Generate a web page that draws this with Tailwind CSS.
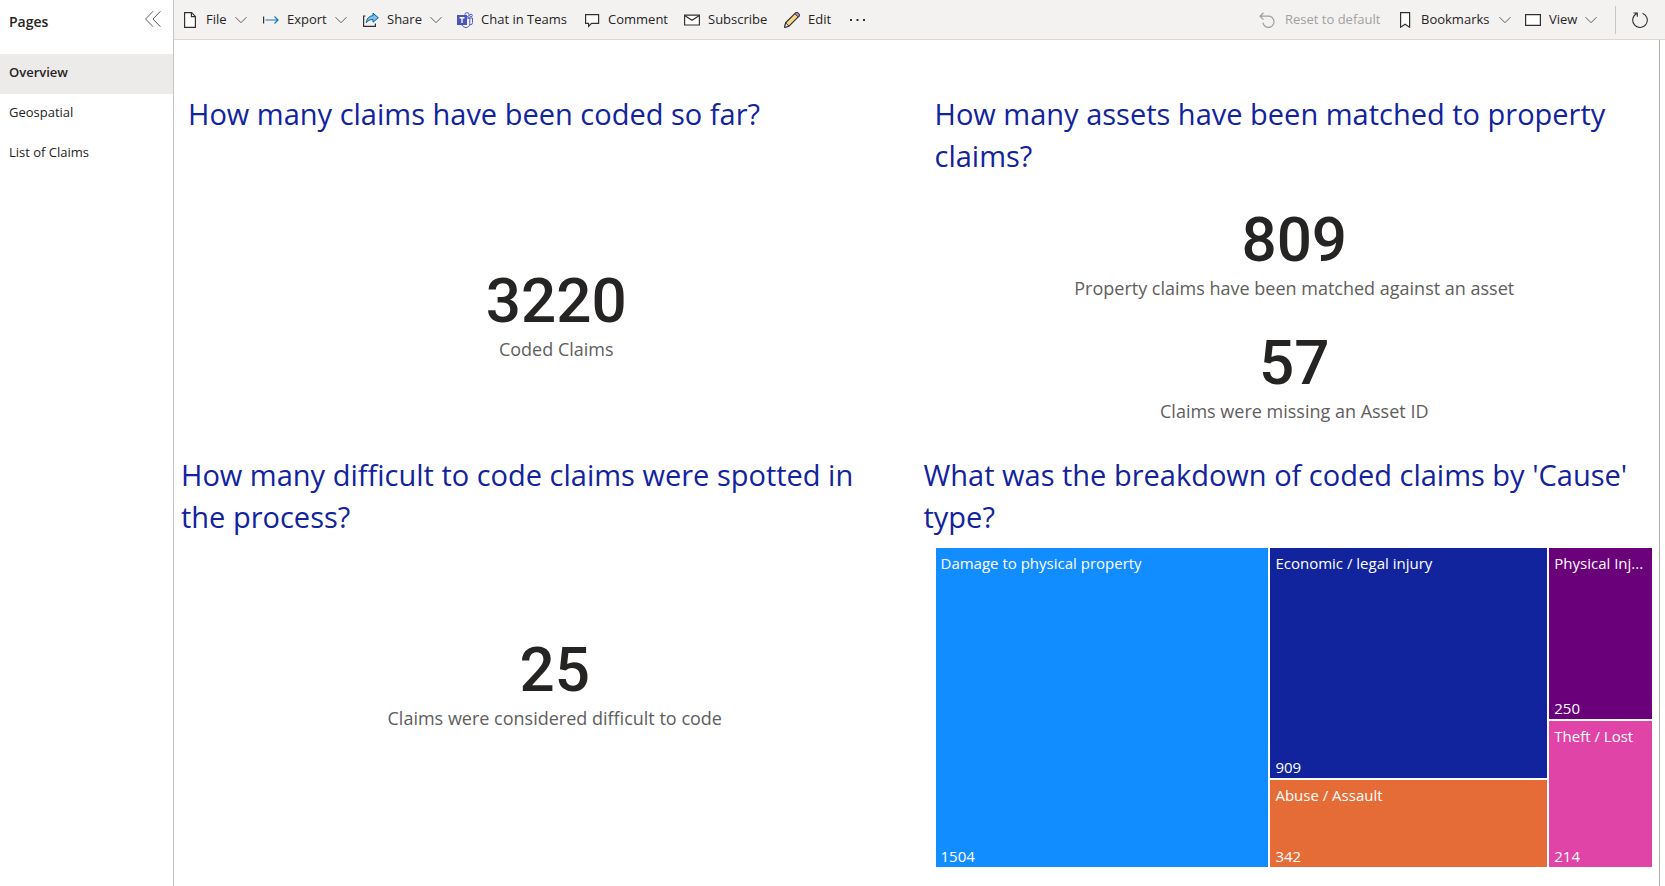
<!DOCTYPE html>
<html lang="en">
<head>
<meta charset="utf-8">
<title>Claims overview</title>
<script src="https://cdn.jsdelivr.net/npm/@tailwindcss/browser@4"></script>
</head>
<body class="flex min-h-screen bg-white font-['Open_Sans','Noto_Sans',sans-serif] text-[13px] text-[#252423]">
<svg class="hidden" aria-hidden="true">
  <symbol id="chevron" viewBox="0 0 12 12"><path d="M.5 3.2 6 8.700 11.500 3.200" fill="none" stroke="currentColor"/></symbol>
</svg>

<aside class="w-[174px] shrink-0 border-r border-[#c8c6c4]">
  <div class="flex h-[54px] items-start justify-between pt-[11px] pr-3 pl-[9px]">
    <h1 class="pt-px text-sm font-semibold">Pages</h1>
    <button type="button" aria-label="Collapse pages" class="text-[#605e5c]">
      <svg class="size-4" viewBox="0 0 16 16" fill="none" stroke="currentColor"><path d="M8 .3.600 8 8 15.700M15.400.3 8 8l7.400 7.700"/></svg>
    </button>
  </div>
  <nav class="flex flex-col">
    <a href="#overview" class="flex h-10 items-center bg-[#edebe9] px-[9px] pb-[2px] font-semibold" aria-current="page">Overview</a>
    <a href="#geospatial" class="flex h-10 items-center px-[9px] pb-[2px]">Geospatial</a>
    <a href="#claims" class="flex h-10 items-center px-[9px] pb-[2px]">List of Claims</a>
  </nav>
</aside>

<div class="flex min-w-0 grow flex-col">
  <header class="flex h-10 shrink-0 items-center justify-between border-b border-[#d9d8d6] bg-[#f3f2f1] pr-[17px] pl-2 whitespace-nowrap">
    <div class="flex items-center">
      <button type="button" class="flex w-[81px] items-center gap-2">
        <svg class="size-4" viewBox="0 0 16 16" fill="#fff" stroke="#323130" stroke-width="1.200"><path d="M2.600.600h7l3.800 3.800v11H2.600z"/><path d="M9.400.6v4h4" fill="none"/></svg>
        File
        <svg class="size-3 text-[#605e5c]"><use href="#chevron"/></svg>
      </button>
      <button type="button" class="flex w-[100px] items-center gap-2">
        <svg class="size-4" viewBox="0 0 16 16" fill="none"><path d="M.6 4.500v7" stroke="#323130" stroke-width="1.200"/><path d="M2.500 8h12.500M11.500 4.500 15 8l-3.500 3.500" stroke="#1a76b8" stroke-width="1.200"/></svg>
        Export
        <svg class="size-3 text-[#605e5c]"><use href="#chevron"/></svg>
      </button>
      <button type="button" class="flex w-[94px] items-center gap-2">
        <svg class="size-4" viewBox="0 0 16 16" fill="none"><path d="M2.500 4H.6v10.400h11.800V11.500" stroke="#323130" stroke-width="1.200"/><path d="M10 1.200 15.300 5.700 10 10.200V7.600C7 7.400 5 8.500 3.300 10.800 3.600 7 5.800 4 10 3.700z" fill="#83beec" stroke="#005b9d" stroke-linejoin="round"/></svg>
        Share
        <svg class="size-3 text-[#605e5c]"><use href="#chevron"/></svg>
      </button>
      <button type="button" class="flex w-[127px] items-center gap-2">
        <svg class="size-4" viewBox="0 0 16 16" fill="none" stroke="#5059c9"><circle cx="10" cy="2.700" r="2.100"/><circle cx="14" cy="3.500" r="1.300"/><path d="M11 6h4.500v4.500a2.300 2.300 0 0 1-2.600 2.300"/><path d="M5 13c1 1.900 2.600 2.500 4 2.500 2.300 0 3.800-1.500 3.800-3.800V6H8"/><path d="M0 3h10v10H0z" fill="#4b53bc" stroke="none"/><path d="M2.500 5.700h5M5 5.700v5.300" stroke="#fff" stroke-width="1.400"/></svg>
        Chat in Teams
      </button>
      <button type="button" class="flex w-[100px] items-center gap-2">
        <svg class="size-4" viewBox="0 0 16 16" fill="#fff" stroke="#323130" stroke-width="1.200"><path d="M1.600 2.600h13v8.800H7.500L4.600 14.300v-2.900h-3z"/></svg>
        Comment
      </button>
      <button type="button" class="flex w-[100px] items-center gap-2">
        <svg class="size-4" viewBox="0 0 16 16" fill="#fff" stroke="#323130" stroke-width="1.200"><path d="M.6 3.100h14.800v9.900H.600z"/><path d="m.6 3.500 7.400 4.700 7.400-4.700" fill="none"/></svg>
        Subscribe
      </button>
      <button type="button" class="flex w-[66px] items-center gap-2">
        <svg class="size-4" viewBox="0 0 16 16" stroke="#323130" stroke-linejoin="round"><path d="M1.600 10.800 11.600.9c1.500-1.200 4.500 1.300 3.400 3.300l-10 10-4.300 1.200z" fill="#f7d583" stroke-width="1.200"/><path d="m10.900 1.700.8-.8c1.500-1.200 4.500 1.300 3.400 3.300l-.8.8z" fill="#b590c9"/><path d="m1.600 10.800 3.400 3.400-4.300 1.200z" fill="#fff"/></svg>
        Edit
      </button>
      <button type="button" aria-label="More options">
        <svg class="size-4" viewBox="0 0 16 16" fill="#323130"><path d="M0 7h2v2H0zM6.500 7h2v2h-2zM13 7h2v2h-2z"/></svg>
      </button>
    </div>
    <div class="flex items-center">
      <button type="button" disabled class="flex w-[141px] items-center gap-[10px] text-[#a19f9d]">
        <svg class="size-4" viewBox="0 0 16 16" fill="none" stroke="currentColor" stroke-width="1.200"><path d="M4.500.8 1 4.200l3.500 3.500M1 4.200h8.500a5.600 5.600 0 1 1-5.600 6.500"/></svg>
        Reset to default
      </button>
      <button type="button" class="flex w-[125px] items-center gap-[10px]">
        <svg class="h-4 w-[11px]" viewBox="0 0 11 16" fill="#fff" stroke="#323130" stroke-width="1.200"><path d="M.6.6h9v14.600L5.100 12.300l-4.500 2.900z"/></svg>
        Bookmarks
        <svg class="size-3 text-[#605e5c]"><use href="#chevron"/></svg>
      </button>
      <button type="button" class="flex w-[90px] items-center gap-2">
        <svg class="size-4" viewBox="0 0 16 16" fill="#fff" stroke="#323130" stroke-width="1.200"><path d="M.6 2.600h14.800v10.800H.600z"/></svg>
        View
        <svg class="size-3 text-[#605e5c]"><use href="#chevron"/></svg>
      </button>
      <div class="mr-4 h-7 w-px bg-[#c8c6c4]"></div>
      <button type="button" aria-label="Refresh">
        <svg class="size-4" viewBox="0 0 16 16" fill="none" stroke="#323130" stroke-width="1.100"><path d="M10.500 1.300a7.300 7.300 0 1 1-5.700.3M1.500 1h3.800v3.800"/></svg>
      </button>
    </div>
  </header>

  <main class="mr-[5px] grid grow grid-cols-2 grid-rows-[414px_1fr] border-r border-[#b3b0ad]">
    <section class="flex flex-col pt-[53px] pl-[14px]">
      <h2 class="h-[84px] text-[29px] leading-[42px] text-[#12239e]">How many claims have been coded so far?</h2>
      <div class="flex flex-col items-center pt-[88px] pl-2">
        <p class="font-[Roboto,sans-serif] text-[62px] leading-[72px] font-medium">3220</p>
        <p class="text-lg leading-6 text-[#605e5c]">Coded Claims</p>
      </div>
    </section>
    <section class="flex flex-col pt-[53px] pl-[18px]">
      <h2 class="h-[84px] text-[29px] leading-[42px] text-[#12239e]">How many assets have been matched to property claims?</h2>
      <div class="flex flex-col items-center gap-[27px] pt-[27px] pr-[5px]">
        <div class="text-center">
          <p class="font-[Roboto,sans-serif] text-[62px] leading-[72px] font-medium">809</p>
          <p class="text-lg leading-6 text-[#605e5c]">Property claims have been matched against an asset</p>
        </div>
        <div class="text-center">
          <p class="font-[Roboto,sans-serif] text-[62px] leading-[72px] font-medium">57</p>
          <p class="text-lg leading-6 text-[#605e5c]">Claims were missing an Asset ID</p>
        </div>
      </div>
    </section>
    <section class="flex flex-col pl-[7px]">
      <h2 class="h-[84px] pr-10 text-[29px] leading-[42px] text-[#12239e]">How many difficult to code claims were spotted in the process?</h2>
      <div class="flex flex-col items-center pt-24 pl-3">
        <p class="font-[Roboto,sans-serif] text-[62px] leading-[72px] font-medium">25</p>
        <p class="text-lg leading-6 text-[#605e5c]">Claims were considered difficult to code</p>
      </div>
    </section>
    <section class="flex flex-col pb-[19px] pl-[7px]">
      <h2 class="h-[84px] text-[29px] leading-[42px] text-[#12239e]">What was the breakdown of coded claims by 'Cause' type?</h2>
      <div class="mt-[10px] mr-[7px] ml-3 flex grow gap-[2px] text-[15px] leading-5 text-white">
        <div class="flex min-w-0 basis-0 flex-col justify-between bg-[#118dff]" style="flex-grow:1504"><span class="truncate px-[5px] pt-[5px]">Damage to physical property</span><span class="px-[5px] pb-px">1504</span></div>
        <div class="flex min-w-0 basis-0 flex-col gap-[2px]" style="flex-grow:1251">
          <div class="flex basis-0 flex-col justify-between bg-[#12239e]" style="flex-grow:909"><span class="truncate px-[5px] pt-[5px]">Economic / legal injury</span><span class="px-[5px] pb-px">909</span></div>
          <div class="flex basis-0 flex-col justify-between bg-[#e66c37]" style="flex-grow:342"><span class="truncate px-[5px] pt-[5px]">Abuse / Assault</span><span class="px-[5px] pb-px">342</span></div>
        </div>
        <div class="flex min-w-0 basis-0 flex-col gap-[2px]" style="flex-grow:464">
          <div class="flex basis-0 flex-col justify-between bg-[#6b007b]" style="flex-grow:250"><span class="px-[5px] pt-[5px] whitespace-nowrap">Physical Inj...</span><span class="px-[5px] pb-px">250</span></div>
          <div class="flex basis-0 flex-col justify-between bg-[#e044a7]" style="flex-grow:214"><span class="truncate px-[5px] pt-[5px]">Theft / Lost</span><span class="px-[5px] pb-px">214</span></div>
        </div>
      </div>
    </section>
  </main>
</div>
</body>
</html>
